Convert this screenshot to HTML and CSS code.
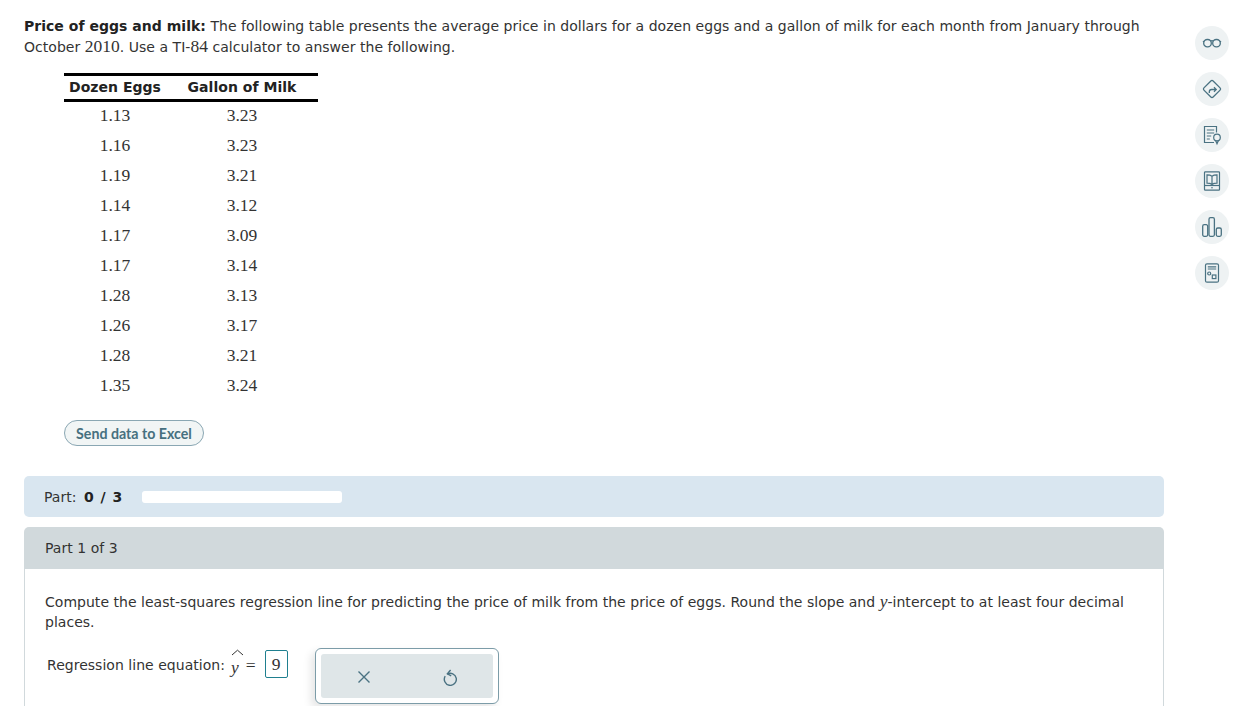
FILE: index.html
```html
<!DOCTYPE html>
<html lang="en">
<head>
<meta charset="utf-8">
<title>Price of eggs and milk</title>
<link rel="stylesheet" href="styles.css">
</head>
<body>
<div class="page">
  <main class="main">
    <p class="intro"><b>Price of eggs and milk:</b> The following table presents the average price in dollars for a dozen eggs and a gallon of milk for each month from January through October <span class="num">2010</span>. Use a TI-<span class="num">84</span> calculator to answer the following.</p>
    <table class="data">
      <thead><tr><th class="c1">Dozen Eggs</th><th class="c2">Gallon of Milk</th></tr></thead>
      <tbody>
        <tr><td>1.13</td><td>3.23</td></tr>
        <tr><td>1.16</td><td>3.23</td></tr>
        <tr><td>1.19</td><td>3.21</td></tr>
        <tr><td>1.14</td><td>3.12</td></tr>
        <tr><td>1.17</td><td>3.09</td></tr>
        <tr><td>1.17</td><td>3.14</td></tr>
        <tr><td>1.28</td><td>3.13</td></tr>
        <tr><td>1.26</td><td>3.17</td></tr>
        <tr><td>1.28</td><td>3.21</td></tr>
        <tr><td>1.35</td><td>3.24</td></tr>
      </tbody>
    </table>
    <button class="excel" type="button">Send data to Excel</button>
    <div class="progress"><span>Part: <b>0 / 3</b></span><div class="bar"></div></div>
    <section class="part">
      <header class="part-head">Part 1 of 3</header>
      <div class="part-body">
        <p class="question">Compute the least-squares regression line for predicting the price of milk from the price of eggs. Round the slope and <i class="var">y</i>-intercept to at least four decimal places.</p>
        <div class="answer">
          <span class="label">Regression line equation:</span>
          <span class="hat"><svg class="caret" width="13" height="7" viewBox="0 0 13 7"><path d="M1 6 6.500 1.200 12 6" fill="none" stroke="#333" stroke-width="1"/></svg><i class="var">y</i></span>
          <span class="eq">=</span>
          <span class="input">9</span>
          <div class="tools">
            <div class="tools-inner">
              <svg width="14" height="14" viewBox="0 0 14 14"><path d="M1.500 1.500l11 11M12.500 1.500l-11 11" stroke="#4a7282" stroke-width="1.400" fill="none"/></svg>
              <svg width="14" height="17" viewBox="0 0 14 17"><path d="M4.200 5.200A6 6 0 1 1 2.200 7.200" fill="none" stroke="#4a7282" stroke-width="1.400"/><path d="M7.600 1 4.400 4.800l3.800 2" fill="none" stroke="#4a7282" stroke-width="1.400"/></svg>
            </div>
          </div>
        </div>
      </div>
    </section>
  </main>
  <aside class="rail">
    <div class="rail-btn"><svg width="20" height="20" viewBox="0 0 20 20" fill="none" stroke="#4a7282" stroke-width="1.300"><rect x="1.700" y="6.500" width="7.600" height="7.300" rx="3.600"/><rect x="10.700" y="6.500" width="7.600" height="7.300" rx="3.600"/><path d="M9 8q1-.7 2 0M1.700 9l-.5-1M18.300 9l.5-1"/></svg></div>
    <div class="rail-btn"><svg width="22" height="22" viewBox="0 0 22 22" fill="none" stroke="#4a7282" stroke-width="1.300"><rect x="4.500" y="4.500" width="13" height="13" rx="1.600" transform="rotate(45 11 11)"/><path d="M8.300 15v-1.200q0-2.300 2.300-2.300h4.400M13 9.300l2.200 2.200-2.200 2.200"/></svg></div>
    <div class="rail-btn"><svg width="20" height="22" viewBox="0 0 20 22" fill="none" stroke="#4a7282" stroke-width="1.200"><path d="M12 18.500H2.500V2.500h12V8.500"/><path d="M4.800 6h7.400M4.800 9h7.400M4.800 12h4.400M4.800 15h3"/><circle cx="15" cy="13.500" r="3.300"/><path d="M13.700 16.700 15 19.800l1.300-3.100"/></svg></div>
    <div class="rail-btn"><svg width="20" height="22" viewBox="0 0 20 22" fill="none" stroke="#4a7282" stroke-width="1.200"><rect x="2.500" y="1.800" width="15" height="18.400" rx=".8"/><path d="M2.500 15.500h15" /><path d="M10 6.200c-1.300-1-3-1.300-5-1.300v8.300c2 0 3.700.3 5 1.300 1.300-1 3-1.300 5-1.300V4.900c-2 0-3.700.3-5 1.300zM10 6.200v8.300"/><circle cx="10" cy="17.800" r=".8" fill="#4a7282" stroke="none"/></svg></div>
    <div class="rail-btn"><svg width="22" height="24" viewBox="0 0 22 24" fill="none" stroke="#4a7282" stroke-width="1.300"><rect x="1.700" y="9.700" width="5" height="11.600" rx="1.500"/><rect x="8" y="2.700" width="5.400" height="18.600" rx="1.500"/><rect x="15.300" y="13" width="5" height="8.300" rx="1.500"/></svg></div>
    <div class="rail-btn"><svg width="18" height="22" viewBox="0 0 18 22" fill="none" stroke="#4a7282" stroke-width="1.200"><rect x="2.500" y="1.800" width="13" height="18.400" rx="1.500"/><path d="M4.800 4.800h8.400M4.800 7h8.400"/><circle cx="6.200" cy="11.500" r="1.500"/><rect x="9.300" y="13" width="3.600" height="3.600"/></svg></div>
  </aside>
</div>
</body>
</html>
```
FILE: styles.css
```css
* { box-sizing: border-box; }
html, body { margin: 0; height: 100%; }
body {
  background: #fff;
  color: #333;
  font-family: "DejaVu Sans", Verdana, sans-serif;
  font-size: 14px;
  letter-spacing: .027px;
  overflow: hidden;
}
.page { display: flex; height: 706px; overflow: hidden; padding: 16px 0 0 24px; }
.main { width: 1140px; flex: none; }
.intro { margin: 0; line-height: 21px; }
.intro b { color: #222; }
.num { font-family: "Liberation Serif", serif; font-size: 17.500px; line-height: 1; }
.data {
  border-collapse: separate;
  border-spacing: 0;
  margin: 15px 0 0 40px;
  width: 254px;
}
.data th {
  font-size: 14px;
  font-weight: 700;
  color: #222;
  height: 29px;
  padding: 0 0 2px;
  border-top: 3px solid #000;
  border-bottom: 3px solid #000;
}
.data th.c1 { width: 102px; }
.data td {
  height: 30px;
  padding: 0 0 4px;
  text-align: center;
  font-family: "Liberation Serif", serif;
  font-size: 17.500px;
}
.excel {
  display: block;
  margin: 18px 0 0 40px;
  width: 140px;
  height: 26px;
  padding: 0;
  border: 1px solid #8aa7b3;
  border-radius: 13px;
  background: #f1f5f5;
  color: #46707f;
  font-family: Lato, sans-serif;
  font-weight: 700;
  font-size: 14.200px;
}
.progress {
  display: flex;
  align-items: center;
  gap: 19px;
  height: 41px;
  margin-top: 30px;
  padding-left: 20px;
  background: #d9e6f0;
  border-radius: 5px;
}
.progress b { color: #222; letter-spacing: 1px; margin-left: 3px; }
.bar { width: 200px; height: 12px; background: #fff; border-radius: 3px; }
.part { margin-top: 10px; }
.part-head {
  height: 42px;
  display: flex;
  align-items: center;
  padding-left: 21px;
  background: #d1d9dc;
  border-radius: 5px 5px 0 0;
}
.part-body {
  height: 200px;
  padding: 23px 20px 0;
  border: solid #d1d9dc;
  border-width: 0 1px;
}
.question { margin: 0; line-height: 20px; }
.question .var { font-size: 17.500px; line-height: 1; }
.var { font-family: "Liberation Serif", serif; font-style: italic; }
.answer { display: flex; align-items: flex-start; margin-top: 16px; padding-left: 2px; }
.label { margin-top: 7px; line-height: 20px; }
.hat { position: relative; margin: 8px 0 0 6px; font-size: 17.500px; line-height: 22px; }
.caret { position: absolute; left: 0; top: -7px; }
.eq { margin: 6px 0 0 7px; font-family: "Liberation Serif", serif; font-size: 17.500px; line-height: 22px; }
.input {
  margin: 2px 0 0 9px;
  width: 23px;
  height: 28px;
  border: 1px solid #1f7f8f;
  border-radius: 2px;
  text-align: center;
  font-family: "Liberation Serif", serif;
  font-size: 17.500px;
  line-height: 26px;
}
.tools {
  margin-left: 27px;
  width: 184px;
  height: 56px;
  padding: 5px;
  background: #fff;
  border: 1px solid #7c9ca8;
  border-radius: 6px;
  box-shadow: -4px 4px 8px rgba(0,0,0,.1);
}
.tools-inner {
  height: 44px;
  display: flex;
  justify-content: space-around;
  align-items: center;
  padding: 2px 0 0;
  background: #dfe6e8;
  border-radius: 3px;
}
.rail {
  flex: none;
  width: 34px;
  margin: 10px 0 0 31px;
  display: flex;
  flex-direction: column;
  gap: 12px;
}
.rail-btn {
  width: 34px;
  height: 34px;
  border-radius: 50%;
  background: #eef2f3;
  display: flex;
  align-items: center;
  justify-content: center;
}
```
